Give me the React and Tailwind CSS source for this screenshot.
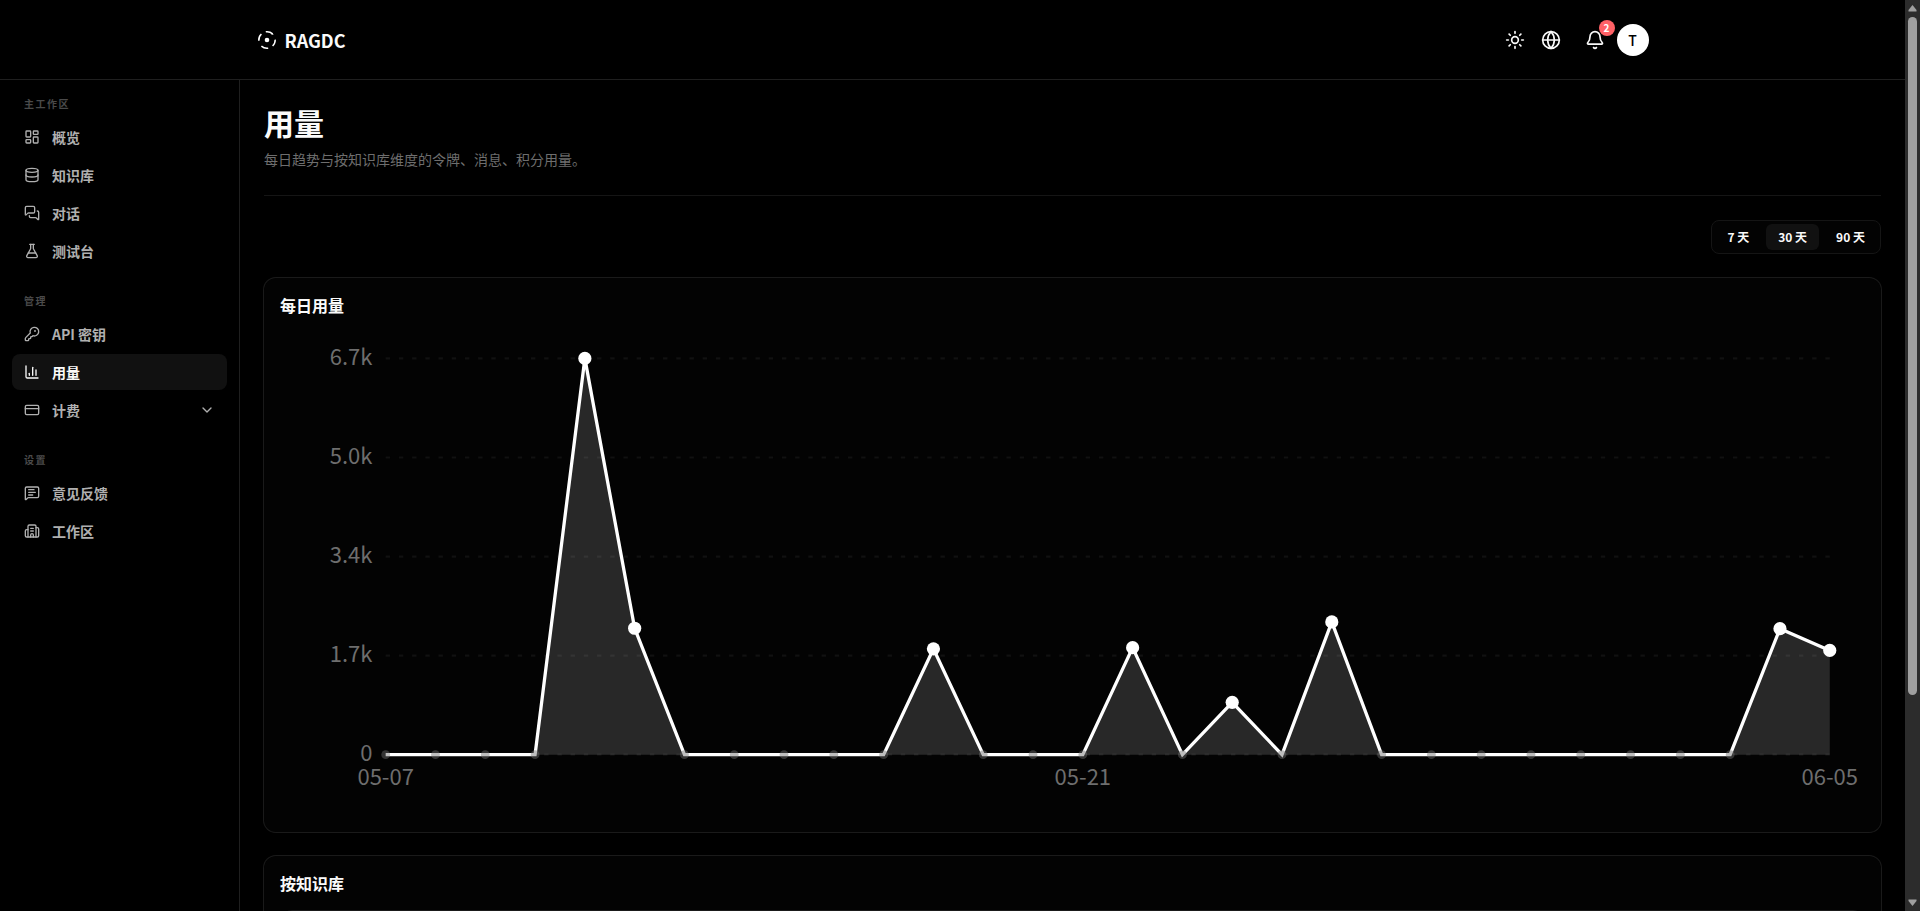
import React from "react";
import {
  LayoutDashboard, Database, MessagesSquare, FlaskConical, KeyRound,
  ChartColumn, CreditCard, ChevronDown, MessageSquareText, Building2, Sun, Globe, Bell,
} from "lucide-react";

const sections = [
  {
    title: "主工作区",
    items: [
      { label: "概览", icon: LayoutDashboard },
      { label: "知识库", icon: Database },
      { label: "对话", icon: MessagesSquare },
      { label: "测试台", icon: FlaskConical },
    ],
  },
  {
    title: "管理",
    items: [
      { label: "API 密钥", icon: KeyRound },
      { label: "用量", icon: ChartColumn, active: true },
      { label: "计费", icon: CreditCard, expandable: true },
    ],
  },
  {
    title: "设置",
    items: [
      { label: "意见反馈", icon: MessageSquareText },
      { label: "工作区", icon: Building2 },
    ],
  },
];

function Sidebar() {
  return (
    <aside className="w-60 shrink-0 border-r border-[#1f1f1f] px-3 pt-4">
      <nav className="flex flex-col gap-6">
        {sections.map((section) => (
          <div key={section.title}>
            <h2 className="mb-2 px-3 text-[10px] leading-[15px] font-semibold tracking-[0.15em] text-[#4a4a4a]">
              {section.title}
            </h2>
            <ul className="flex flex-col gap-0.5">
              {section.items.map(({ label, icon: Icon, active, expandable }) => (
                <li key={label}>
                  <a
                    href="#"
                    aria-current={active ? "page" : undefined}
                    className={
                      active
                        ? "flex h-9 items-center gap-3 rounded-lg bg-[#111111] px-3 text-sm font-semibold text-[#fafafa]"
                        : "flex h-9 items-center gap-3 rounded-lg px-3 text-sm font-semibold text-[#b0b0b0]"
                    }
                  >
                    <Icon size={16} strokeWidth={2} />
                    <span className="flex-1">{label}</span>
                    {expandable && <ChevronDown size={16} strokeWidth={2} />}
                  </a>
                </li>
              ))}
            </ul>
          </div>
        ))}
      </nav>
    </aside>
  );
}

function Logo() {
  return (
    <svg width="20" height="20" viewBox="0 0 20 20" fill="none" stroke="#fff" strokeWidth="1.5" aria-hidden="true">
      <circle cx="10" cy="10" r="2.3" fill="#fff" stroke="none" />
      <path d="M8.8 1.8A8.3 8.3 0 0 1 15.6 3.9" />
      <path d="M14.2 4.6L16.6 4.8L15.6 2.9Z" fill="#fff" stroke="none" />
      <path d="M18.2 9.6A8.3 8.3 0 0 1 15.6 16" />
      <path d="M11.2 18.2A8.3 8.3 0 0 1 4.4 16.1" />
      <path d="M1.8 10.8A8.3 8.3 0 0 1 4.4 4" />
    </svg>
  );
}

function Header() {
  return (
    <header className="h-20 shrink-0 border-b border-[#1f1f1f]">
      <div className="mx-auto flex h-full max-w-[1440px] items-center justify-between px-6">
        <a href="#" className="flex items-center gap-2 text-lg font-bold text-[#fafafa]">
          <Logo />
          RAGDC
        </a>
        <div className="flex items-center text-[#fafafa]">
          <button type="button" aria-label="主题" className="flex size-9 items-center justify-center">
            <Sun size={20} strokeWidth={2} />
          </button>
          <button type="button" aria-label="语言" className="flex size-9 items-center justify-center">
            <Globe size={20} strokeWidth={2} />
          </button>
          <button type="button" aria-label="通知" className="relative ml-2 flex size-9 items-center justify-center">
            <Bell size={20} strokeWidth={2} />
            <span className="absolute -top-0.5 -right-0.5 flex size-4 items-center justify-center rounded-full bg-[#ff6166] text-[10px] leading-4 font-semibold text-white">
              2
            </span>
          </button>
          <button type="button" className="ml-1 flex size-8 items-center justify-center rounded-full bg-white text-sm font-medium text-black">
            T
          </button>
        </div>
      </div>
    </header>
  );
}

const fractions = [
  0, 0, 0, 0, 1, 0.319, 0, 0, 0, 0, 0, 0.267, 0, 0, 0,
  0.27, 0, 0.132, 0, 0.335, 0, 0, 0, 0, 0, 0, 0, 0, 0.318, 0.263,
];
const ticks = ["6.7k", "5.0k", "3.4k", "1.7k", "0"];
const dates = [[0, "05-07"], [14, "05-21"], [29, "06-05"]];
const LEFT = 48;
const RIGHT = 704;
const TOP = 12;
const BOTTOM = 192;
const xAt = (i) => LEFT + (i * (RIGHT - LEFT)) / 29;
const yAt = (f) => BOTTOM - f * (BOTTOM - TOP);

function UsageChart() {
  const line = fractions.map((f, i) => `${i ? "L" : "M"}${xAt(i)} ${yAt(f)}`).join(" ");
  return (
    <svg viewBox="0 0 720 220" className="block w-full" role="img" aria-label="每日用量">
      {ticks.map((label, i) => {
        const y = yAt(1 - i / 4);
        return (
          <g key={label}>
            <line x1={LEFT} x2={RIGHT} y1={y} y2={y} stroke="#111111" strokeDasharray="2 4" />
            <text x={42} y={y + 3} textAnchor="end" fontSize="10" fill="#6e6e6e">{label}</text>
          </g>
        );
      })}
      <path d={`${line} L${RIGHT} ${BOTTOM} L${LEFT} ${BOTTOM} Z`} fill="#fff" fillOpacity="0.15" />
      <path d={line} fill="none" stroke="#fff" strokeWidth="1.5" />
      {fractions.map((f, i) => (
        <circle
          key={i}
          cx={xAt(i)}
          cy={yAt(f)}
          r={f ? 3 : 2}
          fill={f ? "#fff" : "#6e6e6e"}
          fillOpacity={f ? 1 : 0.45}
        />
      ))}
      {dates.map(([i, label]) => (
        <text key={label} x={xAt(i)} y={206} textAnchor="middle" fontSize="10" fill="#6e6e6e">{label}</text>
      ))}
    </svg>
  );
}

function RangePicker() {
  return (
    <div className="flex gap-[5px] rounded-lg border border-[#151515] bg-[#030303] p-[3px]">
      {["7 天", "30 天", "90 天"].map((label) => (
        <button
          key={label}
          type="button"
          aria-pressed={label === "30 天"}
          className={
            label === "30 天"
              ? "h-[26px] rounded-md bg-[#111111] px-3 text-xs font-semibold text-[#fafafa]"
              : "h-[26px] rounded-md px-3 text-xs font-semibold text-[#fafafa]"
          }
        >
          {label}
        </button>
      ))}
    </div>
  );
}

function Card({ title, children }) {
  return (
    <section className="mt-6 rounded-xl bg-[#030303] p-4 ring-1 ring-[#1a1a1a]">
      <h2 className="mb-4 text-base leading-[22px] font-semibold">{title}</h2>
      {children}
    </section>
  );
}

function Scrollbar() {
  return (
    <div className="flex w-[15px] shrink-0 flex-col items-center justify-between bg-[#2c2c2c] py-1" aria-hidden="true">
      <svg width="9" height="9" viewBox="0 0 9 9"><path d="M4.5 1L8.5 6V7.5H.5V6Z" fill="#9f9f9f" /></svg>
      <div className="mt-1 w-[9px] flex-1">
        <div className="h-[77%] rounded-full bg-[#9f9f9f]" />
      </div>
      <svg width="9" height="9" viewBox="0 0 9 9"><path d="M4.5 8L8.5 3V1.5H.5V3Z" fill="#9f9f9f" /></svg>
    </div>
  );
}

export default function App() {
  return (
    <div className="flex h-screen bg-black font-['Noto_Sans_CJK_SC',sans-serif] text-[#fafafa]">
      <div className="flex min-w-0 flex-1 flex-col overflow-hidden">
        <Header />
        <div className="flex min-h-0 flex-1">
          <Sidebar />
          <main className="min-w-0 flex-1 overflow-hidden px-6 pt-6">
            <div className="border-b border-[#151515] pb-6">
              <h1 className="text-3xl leading-9 font-bold">用量</h1>
              <p className="mt-2 text-sm leading-[23px] text-[#6e6e6e]">每日趋势与按知识库维度的令牌、消息、积分用量。</p>
            </div>
            <div className="mt-6 flex justify-end">
              <RangePicker />
            </div>
            <Card title="每日用量">
              <UsageChart />
            </Card>
            <Card title="按知识库">
              <div className="h-60 rounded-xl border border-[#1a1a1a]" />
            </Card>
          </main>
        </div>
      </div>
      <Scrollbar />
    </div>
  );
}
